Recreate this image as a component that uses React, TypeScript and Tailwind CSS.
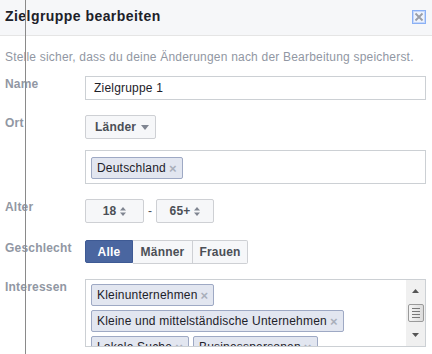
import React from 'react';

const SortIcon = () => (
  <svg width="6" height="9" viewBox="0 0 6 9" className="ml-[4px]">
    <path d="M3 0 L6 3.5 H0 Z" fill="#7f8591" />
    <path d="M3 9 L6 5.5 H0 Z" fill="#7f8591" />
  </svg>
);

const Tag = ({ label }: { label: string }) => (
  <span className="inline-flex h-[22px] shrink-0 items-center rounded-[2px] border border-[#9ea9c4] bg-[#e2e6f0] pl-[5px] pr-[5px] text-[12px] tracking-[0.2px] text-[#1d2129]">
    {label}
    <span className="ml-[3px] text-[13px] font-bold leading-none text-[#a9afbb]">×</span>
  </span>
);

const Row = ({ label, children }: { label: string; children: React.ReactNode }) => (
  <div className="flex">
    <div className="w-[80px] shrink-0 text-[12px] font-bold leading-[16px] tracking-[0.2px] text-[#9197a3]">
      {label}
    </div>
    <div className="flex-1">{children}</div>
  </div>
);

const btn =
  'flex h-[24px] items-center border border-[#ced0d4] bg-[#f6f7f9] text-[12px] font-bold tracking-[0.2px] text-[#4b4f56]';

export default function App() {
  return (
    <div className="relative h-[354px] w-[432px] overflow-hidden bg-white font-['Liberation_Sans',Arial,sans-serif]">
      {/* Header */}
      <div className="flex h-[36px] items-center justify-between border-b border-[#e5e5e5] bg-[#f6f7f9] pb-[2px] pl-[5px] pr-[6px]">
        <span className="text-[14px] font-bold tracking-[0.45px] text-[#1d2129]">Zielgruppe bearbeiten</span>
        <svg width="14" height="14" viewBox="0 0 14 14" className="mt-[1px]">
          <rect x="0.5" y="0.5" width="13" height="13" fill="#eef3fd" stroke="#8ab0f5" />
          <rect x="1.5" y="1.5" width="11" height="11" fill="none" stroke="#c4d7fa" />
          <path d="M3.5 3.5 L10.5 10.5 M10.5 3.5 L3.5 10.5" stroke="#9a9ea6" strokeWidth="1.8" />
        </svg>
      </div>

      {/* Body */}
      <div className="flex flex-col pl-[5px] pr-[6px] pt-[13px]">
        <p className="text-[12px] leading-[16px] tracking-[0.2px] text-[#9197a3]">
          Stelle sicher, dass du deine Änderungen nach der Bearbeitung speicherst.
        </p>

        <div className="mt-[11px]">
          <Row label="Name">
            <div className="flex h-[24px] items-center border border-[#ccd0d4] pl-[8px] text-[12px] tracking-[0.2px] text-[#1d2129]">
              Zielgruppe 1
            </div>
          </Row>
        </div>

        <div className="mt-[15px]">
          <Row label="Ort">
            <button className={`${btn} w-[71px] rounded-[2px] pl-[9px]`}>
              Länder
              <svg width="8" height="5" viewBox="0 0 8 5" className="ml-[5px]">
                <path d="M0 0 H8 L4 5 Z" fill="#7f8591" />
              </svg>
            </button>
            <div className="mt-[11px] h-[34px] border border-[#ccd0d4] pl-[5px] pt-[4px]">
              <Tag label="Deutschland" />
            </div>
          </Row>
        </div>

        <div className="mt-[15px]">
          <Row label="Alter">
            <div className="flex items-center">
              <button className={`${btn} w-[59px] justify-center rounded-[2px]`}>
                18
                <SortIcon />
              </button>
              <span className="w-[12px] text-center text-[12px] text-[#4b4f56]">-</span>
              <button className={`${btn} w-[58px] justify-center rounded-[2px]`}>
                65+
                <SortIcon />
              </button>
            </div>
          </Row>
        </div>

        <div className="mt-[17px]">
          <Row label="Geschlecht">
            <div className="flex">
              <button className="flex h-[23px] w-[48px] items-center justify-center rounded-l-[2px] border border-[#3e5a94] bg-[#4a66a0] text-[12px] font-bold tracking-[0.2px] text-white">
                Alle
              </button>
              <button className={`${btn} h-[23px] w-[60px] justify-center border-l-0`}>Männer</button>
              <button className={`${btn} h-[23px] w-[55px] justify-center rounded-r-[2px] border-l-0`}>
                Frauen
              </button>
            </div>
          </Row>
        </div>

        <div className="mt-[15px]">
          <Row label="Interessen">
            <div className="flex h-[68px] border border-[#ccd0d4]">
              <div className="flex flex-1 flex-col gap-[4px] overflow-hidden pl-[5px] pt-[4px]">
                <div className="flex">
                  <Tag label="Kleinunternehmen" />
                </div>
                <div className="flex">
                  <Tag label="Kleine und mittelständische Unternehmen" />
                </div>
                <div className="flex gap-[4px]">
                  <Tag label="Lokale Suche" />
                  <Tag label="Businesspersonen" />
                </div>
              </div>
              <div className="flex w-[19px] flex-col items-center justify-between bg-[#f0f0f0] py-[9px]">
                <svg width="7" height="4" viewBox="0 0 7 4">
                  <path d="M3.5 0 L7 4 H0 Z" fill="#555" />
                </svg>
                <div className="flex h-[18px] w-[16px] flex-col items-center justify-center gap-[2px] rounded-[2px] border border-[#9a9a9a] bg-gradient-to-r from-[#f4f4f4] to-[#dcdcdc]">
                  <span className="h-px w-[8px] bg-[#777]" />
                  <span className="h-px w-[8px] bg-[#777]" />
                  <span className="h-px w-[8px] bg-[#777]" />
                  <span className="h-px w-[8px] bg-[#777]" />
                </div>
                <svg width="7" height="4" viewBox="0 0 7 4">
                  <path d="M0 0 H7 L3.5 4 Z" fill="#555" />
                </svg>
              </div>
            </div>
          </Row>
        </div>
      </div>

      {/* guide line overlay */}
      <div className="pointer-events-none absolute left-[25px] top-0 h-full w-px bg-[#8a8a8a]" />
    </div>
  );
}
